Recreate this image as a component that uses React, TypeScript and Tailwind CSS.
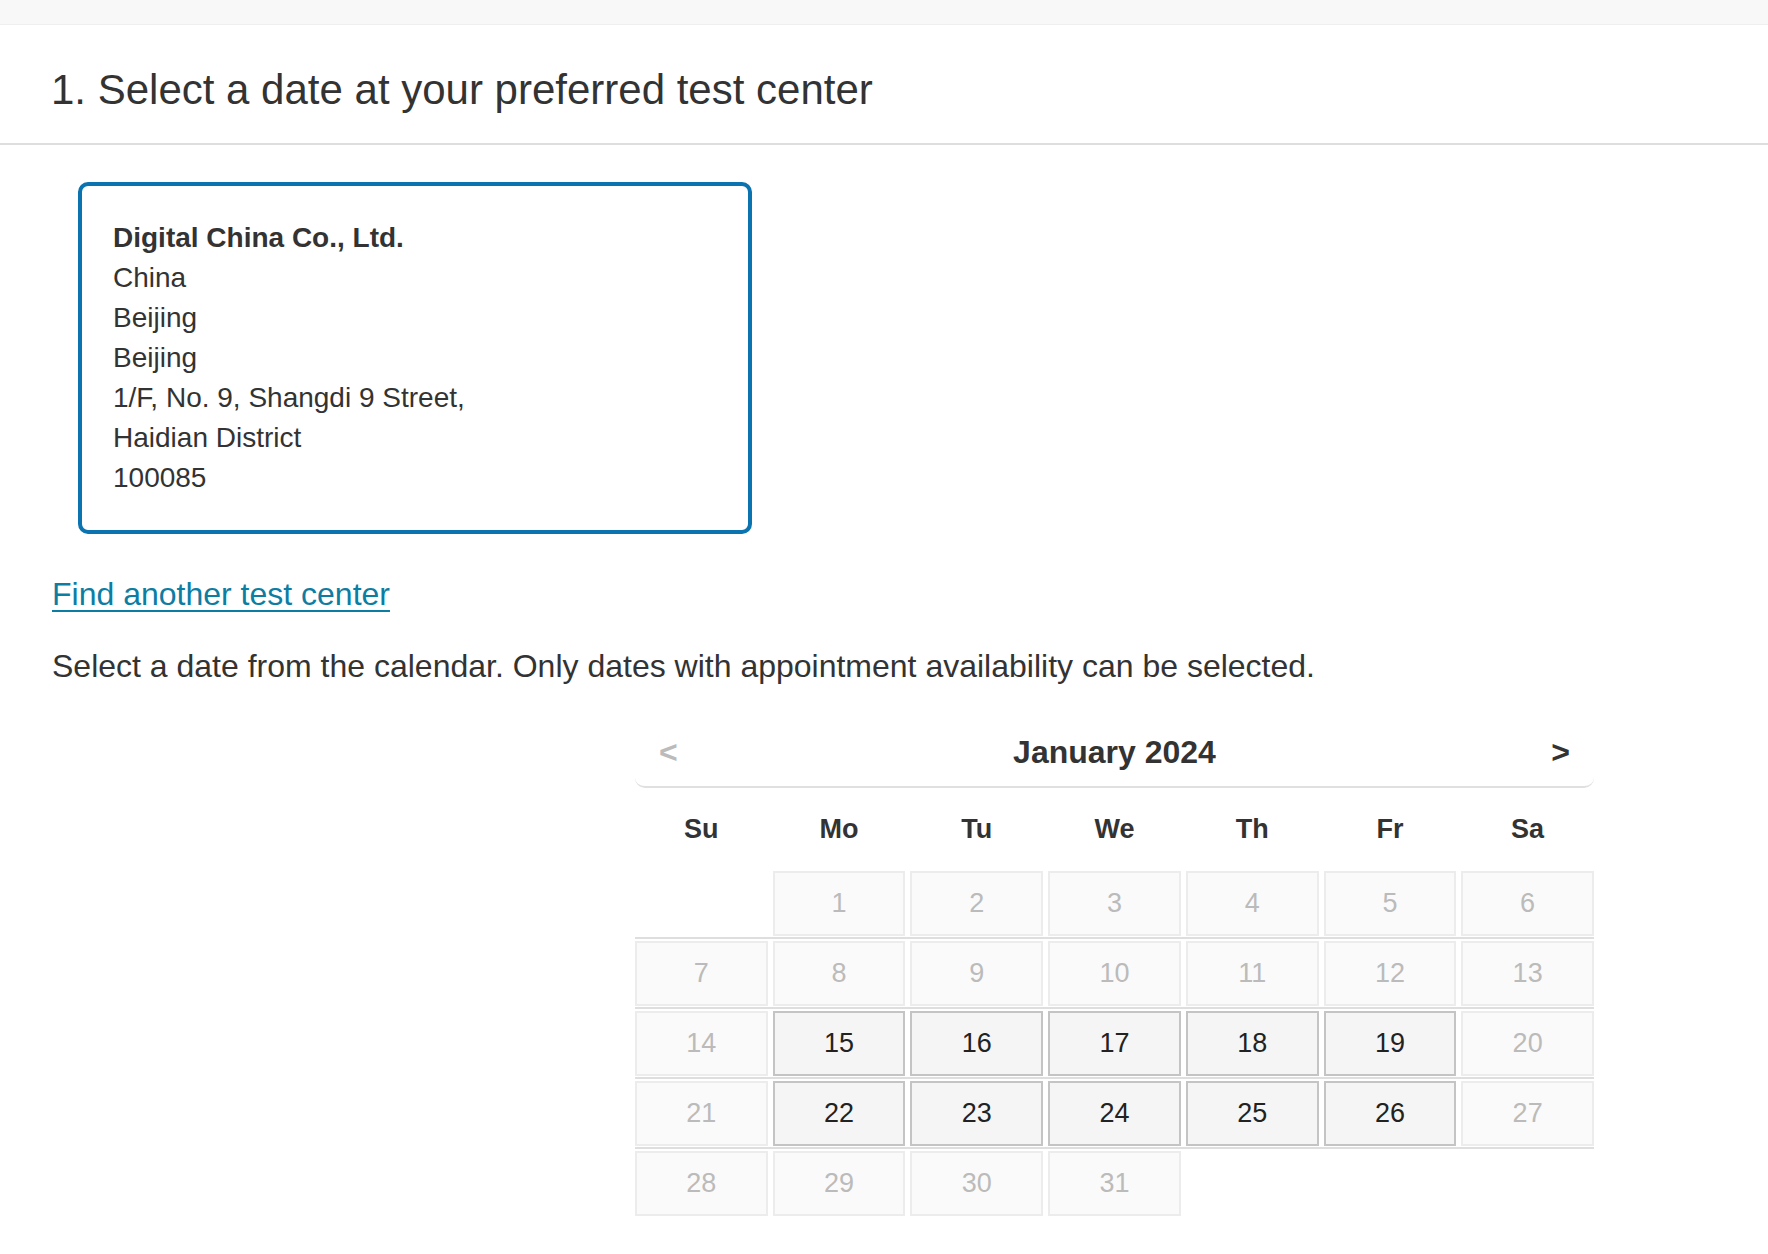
const days = ['Su', 'Mo', 'Tu', 'We', 'Th', 'Fr', 'Sa'];

const available = [15, 16, 17, 18, 19, 22, 23, 24, 25, 26];

// January 2024 starts on a Monday
const weeks: (number | null)[][] = [
  [null, 1, 2, 3, 4, 5, 6],
  [7, 8, 9, 10, 11, 12, 13],
  [14, 15, 16, 17, 18, 19, 20],
  [21, 22, 23, 24, 25, 26, 27],
  [28, 29, 30, 31, null, null, null],
];

const font = { fontFamily: '"Liberation Sans", Arial, sans-serif' };

function DayCell({ day }: { day: number | null }) {
  if (day === null) return <div className="h-[65px]" />;
  const open = available.includes(day);
  return (
    <div
      className={`h-[65px] flex items-center justify-center border-2 text-[27px] ${
        open
          ? 'bg-[#f5f5f5] border-[#c4c4c4] text-[#222] cursor-pointer'
          : 'bg-[#fafafa] border-[#ececec] text-[#bbb]'
      }`}
    >
      {day}
    </div>
  );
}

export default function App() {
  return (
    <div className="min-h-screen bg-white text-[#333]" style={font}>
      {/* Top strip */}
      <div className="h-[25px] bg-[#f8f8f8] border-b border-[#efefef]" />

      {/* Heading */}
      <div className="h-[120px] flex items-center pl-[51px] border-b-2 border-[#dedede]">
        <h1 className="text-[42px] leading-none mt-[12px]">1. Select a date at your preferred test center</h1>
      </div>

      <div className="pl-[52px] pt-[37px] pb-10">
        {/* Test center card */}
        <div className="ml-[26px] w-[674px] h-[352px] border-4 border-[#0a73b0] rounded-[10px] px-[31px] pt-[32px] text-[28px] leading-[40px]">
          <div className="font-bold">Digital China Co., Ltd.</div>
          <div>China</div>
          <div>Beijing</div>
          <div>Beijing</div>
          <div>1/F, No. 9, Shangdi 9 Street,</div>
          <div>Haidian District</div>
          <div>100085</div>
        </div>

        <a href="#" className="inline-block mt-[40px] text-[32px] leading-[40px] text-[#0c7da3] underline underline-offset-[5px] decoration-2">
          Find another test center
        </a>

        <p className="mt-[32px] text-[32px] leading-[40px]">
          Select a date from the calendar. Only dates with appointment availability can be selected.
        </p>

        {/* Calendar */}
        <div className="ml-[583px] mt-[22px] w-[959px]">
          <div className="h-[80px] flex items-center justify-between px-[24px] pt-[10px] border-b-2 border-[#e0e0e0] rounded-b-[10px] text-[32px] font-bold">
            <button className="text-[#bbb]">&lt;</button>
            <span className="text-[#333]">January 2024</span>
            <button className="text-[#333]">&gt;</button>
          </div>

          <div className="grid grid-cols-7 gap-x-[5px] h-[81px] items-center pt-[2px]">
            {days.map((d) => (
              <div key={d} className="text-center text-[27px] font-bold text-[#333]">
                {d}
              </div>
            ))}
          </div>

          {weeks.map((week, i) => (
            <div
              key={i}
              className={`grid grid-cols-7 gap-x-[5px] pt-[2px] pb-[1px] ${
                i < weeks.length - 1 ? 'border-b-2 border-[#dedede]' : ''
              }`}
            >
              {week.map((day, j) => (
                <DayCell key={j} day={day} />
              ))}
            </div>
          ))}
        </div>
      </div>
    </div>
  );
}
